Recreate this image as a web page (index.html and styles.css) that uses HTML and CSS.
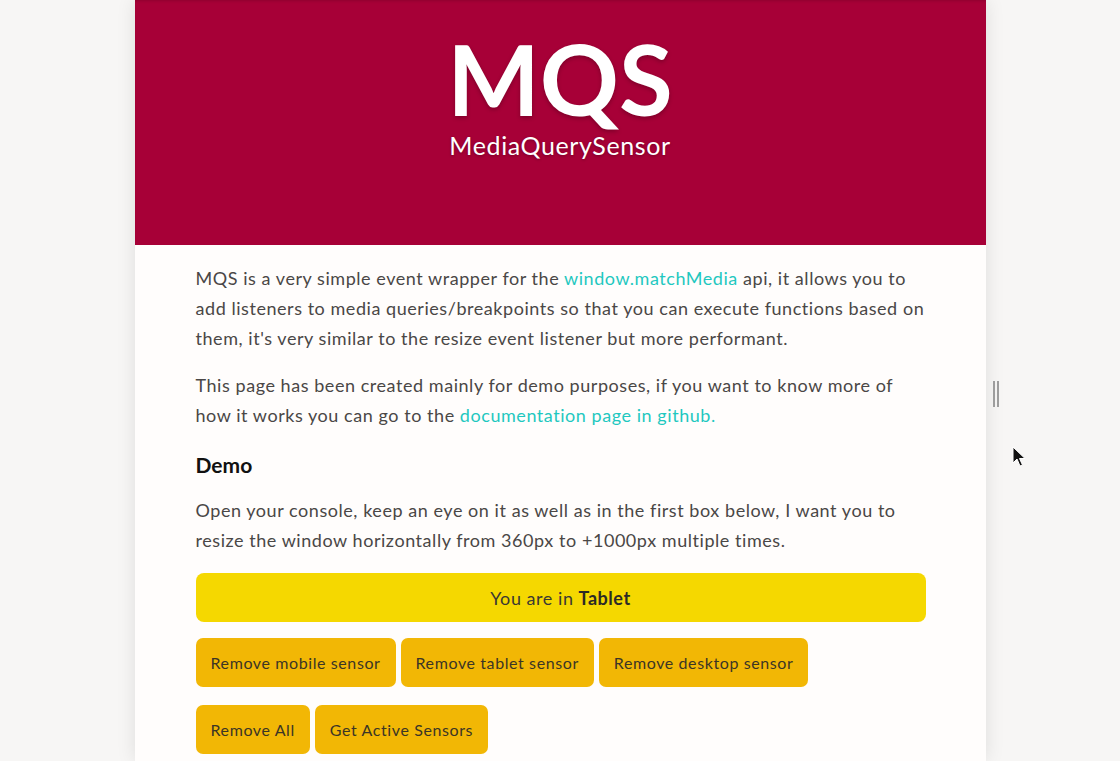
FILE: index.html
```html
<!DOCTYPE html>
<html lang="en">
<head>
<meta charset="utf-8">
<title>MQS - MediaQuerySensor</title>
<link rel="stylesheet" href="styles.css">
</head>
<body>
<div class="page">
  <header class="hero">
    <h1 class="hero-title">MQS</h1>
    <p class="hero-sub">MediaQuerySensor</p>
  </header>
  <main class="content">
    <p>MQS is a very simple event wrapper for the <a href="#">window.matchMedia</a> api, it allows you to add listeners to media queries/breakpoints so that you can execute functions based on them, it's very similar to the resize event listener but more performant.</p>
    <p>This page has been created mainly for demo purposes, if you want to know more of how it works you can go to the <a href="#">documentation page in github.</a></p>
    <h2 class="section-title">Demo</h2>
    <p>Open your console, keep an eye on it as well as in the first box below, I want you to resize the window horizontally from 360px to +1000px multiple times.</p>
    <div class="status">You are in <strong>Tablet</strong></div>
    <div class="buttons">
      <button class="btn">Remove mobile sensor</button>
      <button class="btn">Remove tablet sensor</button>
      <button class="btn">Remove desktop sensor</button>
    </div>
    <div class="buttons">
      <button class="btn">Remove All</button>
      <button class="btn">Get Active Sensors</button>
    </div>
  </main>
</div>
<div class="handle"><span></span><span></span></div>
<svg class="cursor" width="14" height="22" viewBox="0 0 14 22"><path d="M1 1 L1 17 L5 13 L8 20 L10.5 19 L7.5 12.5 L13 12.5 Z" fill="#111" stroke="#fff" stroke-width="1"/></svg>
</body>
</html>
```
FILE: styles.css
```css
html, body {
  margin: 0;
  padding: 0;
}
body {
  background: #f7f6f5;
  font-family: Lato, "Open Sans", sans-serif;
  color: #4a4746;
  min-height: 761px;
  overflow: hidden;
}
.page {
  width: 851px;
  margin: 0 auto;
  background: #fffdfc;
  min-height: 761px;
  box-shadow: 0 0 18px rgba(0,0,0,0.10);
}
.hero {
  height: 245px;
  background: #a70037;
  display: flex;
  flex-direction: column;
  align-items: center;
  color: #fff;
  box-shadow: inset 0 3px 3px -2px rgba(0,0,0,0.15);
}
.hero-title {
  margin: 22px 0 0;
  font-size: 98px;
  line-height: 112px;
  font-weight: 700;
  letter-spacing: 0;
  text-shadow: 0 2px 4px rgba(0,0,0,0.25);
}
.hero-sub {
  margin: -4px 0 0;
  font-size: 25px;
  line-height: 30px;
  letter-spacing: 0.6px;
  text-shadow: 0 1px 3px rgba(0,0,0,0.3);
}
.content {
  padding: 18px 60px 0 61px;
}
.content p {
  margin: 0 0 17px;
  font-size: 18px;
  line-height: 30px;
  letter-spacing: 0.55px;
}
.content a {
  color: #1fc8c0;
  text-decoration: none;
}
.section-title {
  margin: 20px 0 15px;
  font-size: 21px;
  line-height: 30px;
  color: #111;
  font-weight: 700;
}
.status {
  height: 49px;
  background: #f5d800;
  border-radius: 8px;
  display: flex;
  align-items: center;
  justify-content: center;
  font-size: 18px;
  letter-spacing: 0.55px;
  color: #3b3833;
  margin-top: 18px;
}
.status strong {
  margin-left: 5px;
  color: #2c2a26;
}
.buttons {
  display: flex;
  gap: 5px;
  margin-top: 16px;
}
.buttons + .buttons {
  margin-top: 18px;
}
.btn {
  height: 49px;
  padding: 0 15px;
  border: none;
  border-radius: 7px;
  background: #f2b705;
  font-family: inherit;
  font-size: 16px;
  letter-spacing: 0.6px;
  color: #3b3526;
}
.handle {
  position: absolute;
  left: 993px;
  top: 381px;
  display: flex;
  gap: 2px;
}
.handle span {
  width: 2px;
  height: 26px;
  background: #9d9d9d;
}
.cursor {
  position: absolute;
  left: 1012px;
  top: 446px;
}
```
